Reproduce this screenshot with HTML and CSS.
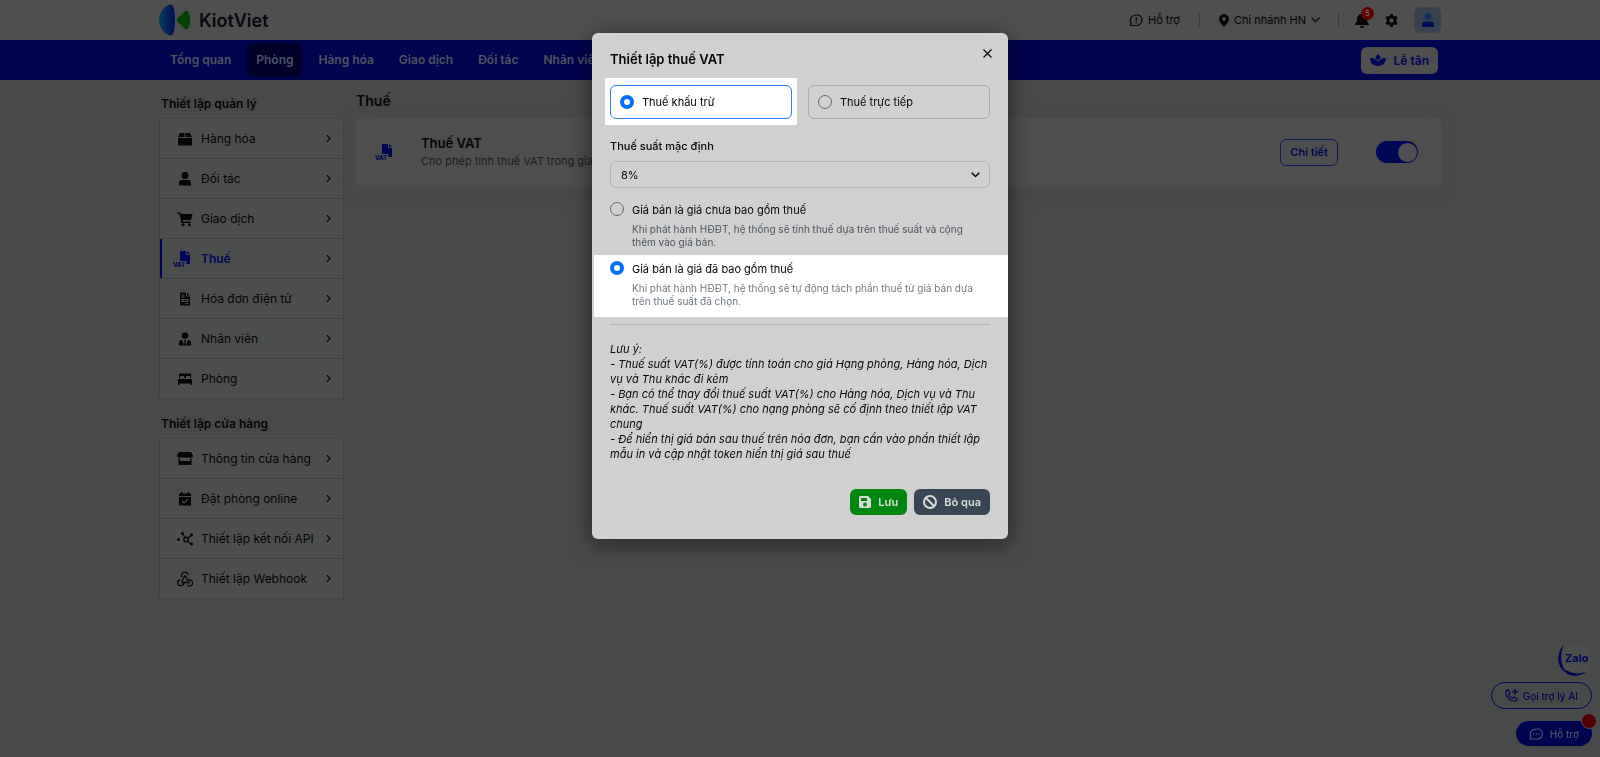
FILE: index.html
```html
<!DOCTYPE html>
<html lang="vi">
<head>
    <meta charset="UTF-8">
    <meta name="viewport" content="width=device-width, initial-scale=1.0">
    <title>KiotViet - Thuế</title>
    <link rel="stylesheet" href="styles.css">
</head>
<body>
    <!-- shared arrow -->
    <svg class="sprite" aria-hidden="true">
        <symbol id="chevron" viewBox="0 0 6 10"><path d="M1 1l4 4-4 4" fill="none" stroke="currentColor" stroke-width="1.5"/></symbol>
    </svg>

    <header class="topbar">
        <div class="container topbar-row">
            <a href="#" class="logo">
                <svg width="32" height="32" viewBox="0 0 32 32">
                    <defs>
                        <linearGradient id="g1"><stop offset="0" stop-color="#083c5a"/><stop offset="1" stop-color="#000c58"/></linearGradient>
                    </defs>
                    <path fill="url(#g1)" d="M12 0.500C14 0.500 16 5 16 16s-2 15.500-4 15.500C7 31.500 0 25 0 16S7 0.500 12 0.500z"/>
                    <path fill="#004200" d="M18.500 14.500l7-7C29 4.500 31 10 31 16s-2 11.500-5.500 8.500l-7-7a2 2 0 0 1 0-3z"/>
                </svg>
                <span>KiotViet</span>
            </a>
            <div class="topbar-right">
                <a href="#" class="top-link">
                    <svg width="14" height="13" viewBox="0 0 14 13" fill="none" stroke="currentColor" stroke-width="1.200"><path d="M1 12l1-3A5 5 0 0 1 1.500 6C1.500 3 4 1 7.500 1S13 3 13 6s-2.500 5.500-5.500 5.500H1"/><path d="M7.400 3.500v3M7.400 7.800v1.400" stroke-width="1.600"/></svg>
                    Hỗ trợ
                </a>
                <span class="divider"></span>
                <button class="top-link">
                    <svg width="10" height="13" viewBox="0 0 10 13"><path fill="currentColor" fill-rule="evenodd" d="M5 0a5 5 0 0 1 5 5c0 3-3.500 6-5 8C3.500 11 0 8 0 5a5 5 0 0 1 5-5zm0 3a2 2 0 1 0 0 4 2 2 0 0 0 0-4z"/></svg>
                    Chi nhánh HN
                    <svg width="9" height="6" viewBox="0 0 9 6" fill="none" stroke="currentColor" stroke-width="1.200"><path d="M0.500 0.700l4 4 4-4"/></svg>
                </button>
                <span class="divider divider-end"></span>
                <button class="icon-btn" aria-label="Thông báo">
                    <svg width="14" height="15" viewBox="0 0 14 15"><path fill="currentColor" d="M7 0a1 1 0 0 1 1 1c2.500.500 4 2.300 4 5 0 3 .800 4 2 5v1H0v-1c1.200-1 2-2 2-5 0-2.700 1.500-4.500 4-5a1 1 0 0 1 1-1zM5 13h4a2 2 0 0 1-4 0z"/></svg>
                    <span class="badge">5</span>
                </button>
                <button class="icon-btn" aria-label="Cài đặt">
                    <svg width="13" height="13" viewBox="0 0 24 24"><path fill="currentColor" fill-rule="evenodd" d="M9.500 0h5l.700 3.500 2 1.200L20.700 3.500l2.500 4.400-2.700 2.500v3.200l2.700 2.500-2.500 4.400-3.500-1.200-2 1.200-.700 3.500h-5l-.700-3.500-2-1.200-3.500 1.200L.800 16.100l2.700-2.500v-3.200L.800 7.900l2.500-4.400 3.500 1.200 2-1.200zM12 8a4 4 0 1 0 0 8 4 4 0 0 0 0-8z"/></svg>
                </button>
                <button class="avatar" aria-label="Tài khoản">
                    <svg width="12" height="14" viewBox="0 0 12 14"><circle cx="6" cy="3.500" r="3.500" fill="#11305c"/><path fill="#000c50" d="M0 14v-2.500C0 9.500 1.500 8.500 3 8.500h6c1.500 0 3 1 3 3V14z"/></svg>
                </button>
            </div>
        </div>
    </header>

    <nav class="navbar">
        <div class="container navbar-row">
            <div class="nav-links">
                <a href="#">Tổng quan</a>
                <a href="#" class="active">Phòng</a>
                <a href="#">Hàng hóa</a>
                <a href="#">Giao dịch</a>
                <a href="#">Đối tác</a>
                <a href="#">Nhân viên</a>
            </div>
            <button class="reception">
                <svg width="16" height="12" viewBox="0 0 16 12"><path fill="currentColor" d="M8 0c1.500 1.500 2.500 2.500 2.500 4L8 6.500 5.500 4C5.500 2.500 6.500 1.500 8 0zM0 4c3 0 6 .500 8 4 2-3.500 5-4 8-4-.300 5-3 8-8 8S.300 9 0 4z"/></svg>
                Lễ tân
            </button>
        </div>
    </nav>

    <div class="container page">
        <aside class="sidebar">
            <h2>Thiết lập quản lý</h2>
            <ul class="menu">
                <li><a href="#">
                    <svg class="ico" viewBox="0 0 16 16"><path fill="currentColor" d="M3 2h4.500v4H1zM8.500 2H13l2 4H8.500zM1 7h14v6.500a1 1 0 0 1-1 1H2a1 1 0 0 1-1-1z"/></svg>
                    <span>Hàng hóa</span><svg class="chev"><use href="#chevron"/></svg></a></li>
                <li><a href="#">
                    <svg class="ico" viewBox="0 0 16 16"><circle cx="8" cy="4.500" r="3.500" fill="currentColor"/><path fill="currentColor" d="M2 14.500V12a3 3 0 0 1 3-3h6a3 3 0 0 1 3 3v2.500z"/></svg>
                    <span>Đối tác</span><svg class="chev"><use href="#chevron"/></svg></a></li>
                <li><a href="#">
                    <svg class="ico" viewBox="0 0 16 16"><path fill="currentColor" d="M0.500 1.500h3L4 3h11.500L14 9H5.500l.300 1.500H14V12H4.500L2.500 3h-2z"/><circle cx="6" cy="13.700" r="1.500" fill="currentColor"/><circle cx="12.500" cy="13.700" r="1.500" fill="currentColor"/></svg>
                    <span>Giao dịch</span><svg class="chev"><use href="#chevron"/></svg></a></li>
                <li class="active"><a href="#">
                    <svg class="ico-vat" viewBox="0 0 18 18"><path fill="currentColor" d="M7 1h6v4h4v9h-3.500v-3H7zM14 1l3 3h-3z"/><text x="0" y="17">VAT</text></svg>
                    <span>Thuế</span><svg class="chev"><use href="#chevron"/></svg></a></li>
                <li><a href="#">
                    <svg class="ico" viewBox="0 0 16 16"><path fill="currentColor" fill-rule="evenodd" d="M3 1.500h6v4h4v9H3zM10 1.500l3 3h-3zM4.500 3.500v1h3v-1zM4.500 5.500v1h3v-1zM4.500 8v3h7V8zM6 9h4v1H6zM8.500 12v1h3v-1z"/></svg>
                    <span>Hóa đơn điện tử</span><svg class="chev"><use href="#chevron"/></svg></a></li>
                <li><a href="#">
                    <svg class="ico" viewBox="0 0 16 16"><circle cx="8" cy="4.500" r="3.300" fill="currentColor"/><path fill="currentColor" d="M2 14.500V12a3 3 0 0 1 3-3l2 5 .500-3-.500-2h2l-.500 2 .500 3 2-5a3 3 0 0 1 3 3v2.500z"/></svg>
                    <span>Nhân viên</span><svg class="chev"><use href="#chevron"/></svg></a></li>
                <li><a href="#">
                    <svg class="ico" viewBox="0 0 16 16"><path fill="currentColor" fill-rule="evenodd" d="M2 2.500h12V7h-1V5H9v2H7V5H3v2H2zM1 8h14v6h-1.500v-1.500h-11V14H1z"/></svg>
                    <span>Phòng</span><svg class="chev"><use href="#chevron"/></svg></a></li>
            </ul>

            <h2>Thiết lập cửa hàng</h2>
            <ul class="menu">
                <li><a href="#">
                    <svg class="ico" viewBox="0 0 16 16"><path fill="currentColor" fill-rule="evenodd" d="M2 1h12l2 3.500c0 1.500-.800 2-1.500 2h-13C.800 6.500 0 6 0 4.500zM1.500 7.500H3V10h10V7.500h1.500V14h-13z"/></svg>
                    <span>Thông tin cửa hàng</span><svg class="chev"><use href="#chevron"/></svg></a></li>
                <li><a href="#">
                    <svg class="ico" viewBox="0 0 16 16"><path fill="currentColor" fill-rule="evenodd" d="M4 1h1.500v1.500h5V1H12v1.500h2V5H2V2.500h2zM2 6h12v8.500H2zM5.500 9.500l-.800.800L7 12.700l4.300-4.200-.800-.800L7 11z"/></svg>
                    <span>Đặt phòng online</span><svg class="chev"><use href="#chevron"/></svg></a></li>
                <li><a href="#">
                    <svg class="ico" viewBox="0 0 16 16" fill="none" stroke="currentColor" stroke-width="1.400"><circle cx="9" cy="8.500" r="2.200"/><path d="M8 6.500L6 3M11 7l3.500-3M10.500 10.500l4 2.500"/><g fill="currentColor" stroke="none"><circle cx="1.500" cy="8.500" r="1.500"/><circle cx="5.500" cy="2.500" r="1.500"/><circle cx="14.500" cy="3.700" r="1.500"/><circle cx="14.500" cy="13" r="1.500"/></g></svg>
                    <span>Thiết lập kết nối API</span><svg class="chev"><use href="#chevron"/></svg></a></li>
                <li><a href="#">
                    <svg class="ico" viewBox="0 0 16 16" fill="none" stroke="currentColor" stroke-width="1.300"><path d="M5.300 6.300A3.200 3.200 0 1 1 11 4.200M8 4.500l3 5a3 3 0 1 1-.500 4.500M8 4.500l-3.500 7M4.500 11.500H10h3M3.300 8.700a3 3 0 1 0 3.500 2.900"/></svg>
                    <span>Thiết lập Webhook</span><svg class="chev"><use href="#chevron"/></svg></a></li>
            </ul>
        </aside>

        <main class="content">
            <h1>Thuế</h1>
            <section class="card">
                <svg class="ico-vat" viewBox="0 0 18 18"><path fill="currentColor" d="M7 1h6v4h4v9h-3.500v-3H7zM14 1l3 3h-3z"/><text x="0" y="17">VAT</text></svg>
                <div class="card-text">
                    <h3>Thuế VAT</h3>
                    <p>Cho phép tính thuế VAT trong giao dịch</p>
                </div>
                <button class="detail">Chi tiết</button>
                <input type="checkbox" class="switch" aria-label="Thuế VAT" checked>
            </section>
        </main>
    </div>

    <div class="floating">
        <a href="#" class="zalo">
            <svg width="34" height="34" viewBox="0 0 34 34"><circle cx="18" cy="16" r="16" fill="#4b4d4c"/><path fill="#000656" d="M6 1C-2 10-1 23 6 28l1 1c5 5 14 5 21 0-7 2-13 2-18-1l-3-1C2 21 2 9 6 1z"/></svg>
            <span>Zalo</span>
        </a>
        <button class="ai-call">
            <svg width="13" height="13" viewBox="0 0 13 13" fill="none" stroke="currentColor" stroke-width="1.200"><path d="M1 2l2-1.300L5 4 3.800 5.500c.500 1.500 2 3 3.700 3.700L9 8l3.300 2-1.300 2C6 13.500-.500 7 1 2z"/><path d="M10 0v5.500M7.300 2.700h5.500" stroke-width="1.500"/></svg>
            Gọi trợ lý AI
        </button>
        <button class="support">
            <svg width="14" height="12" viewBox="0 0 14 12" fill="none" stroke="currentColor" stroke-width="1.200"><path d="M1 11l1-2.500C0 4 3 1 7.500 1 11 1 13.400 3 13.400 6S11 11 7.500 11z"/><path d="M4.200 6h1.200M6.900 6h1.200M9.600 6h1.200" stroke-width="1.400"/></svg>
            Hỗ trợ
            <span class="dot"></span>
        </button>
    </div>

    <div class="overlay">
        <form class="modal" role="dialog" aria-labelledby="modal-title">
            <button type="button" class="close" aria-label="Đóng">
                <svg width="9" height="9" viewBox="0 0 9 9" stroke="currentColor" stroke-width="1.200"><path d="M0.500 0.500l8 8M8.500 0.500l-8 8"/></svg>
            </button>
            <h2 id="modal-title">Thiết lập thuế VAT</h2>

            <div class="methods">
                <div class="method highlight">
                    <label><input type="radio" name="method" checked>Thuế khấu trừ</label>
                </div>
                <div class="method">
                    <label><input type="radio" name="method">Thuế trực tiếp</label>
                </div>
            </div>

            <label class="field-label" for="rate">Thuế suất mặc định</label>
            <div class="select-wrap">
                <select id="rate">
                    <option>8%</option>
                </select>
                <svg width="9" height="6" viewBox="0 0 9 6" fill="none" stroke="currentColor" stroke-width="1.500"><path d="M0.700 0.700l3.800 3.800 3.800-3.800"/></svg>
            </div>

            <div class="price">
                <input type="radio" name="price" id="price-excl">
                <div>
                    <label for="price-excl">Giá bán là giá chưa bao gồm thuế</label>
                    <p>Khi phát hành HĐĐT, hệ thống sẽ tính thuế dựa trên thuế suất và cộng thêm vào giá bán.</p>
                </div>
            </div>
            <div class="price highlight">
                <input type="radio" name="price" id="price-incl" checked>
                <div>
                    <label for="price-incl">Giá bán là giá đã bao gồm thuế</label>
                    <p>Khi phát hành HĐĐT, hệ thống sẽ tự động tách phần thuế từ giá bán dựa trên thuế suất đã chọn.</p>
                </div>
            </div>

            <hr>

            <div class="note">
                <p>Lưu ý:</p>
                <p>- Thuế suất VAT(%) được tính toán cho giá Hạng phòng, Hàng hóa, Dịch vụ và Thu khác đi kèm</p>
                <p>- Bạn có thể thay đổi thuế suất VAT(%) cho Hàng hóa, Dịch vụ và Thu khác. Thuế suất VAT(%) cho hạng phòng sẽ cố định theo thiết lập VAT chung</p>
                <p>- Để hiển thị giá bán sau thuế trên hóa đơn, bạn cần vào phần thiết lập mẫu in và cập nhật token hiển thị giá sau thuế</p>
            </div>

            <div class="actions">
                <button type="submit" class="save">
                    <svg width="12" height="12" viewBox="0 0 12 12"><path fill="currentColor" fill-rule="evenodd" d="M1.500 0H9l3 3v7.500a1.500 1.500 0 0 1-1.500 1.500h-9A1.500 1.500 0 0 1 0 10.500v-9A1.500 1.500 0 0 1 1.500 0zM2 2v3h6V2zM6 6.500a2 2 0 1 0 0 4 2 2 0 0 0 0-4z"/></svg>
                    Lưu
                </button>
                <button type="button" class="cancel">
                    <svg width="14" height="14" viewBox="0 0 14 14" fill="none" stroke="currentColor" stroke-width="2"><circle cx="7" cy="7" r="6"/><path d="M3 3l8 8"/></svg>
                    Bỏ qua
                </button>
            </div>
        </form>
    </div>
</body>
</html>
```
FILE: styles.css
```css
* {
    box-sizing: border-box;
}
body {
    margin: 0;
    min-height: 100vh;
    background-color: #484a49;
    color: #050505;
    font-family: Inter, "Liberation Sans", sans-serif;
    font-size: 12px;
}
h1, h2, h3, p, ul {
    margin: 0;
    padding: 0;
}
ul {
    list-style: none;
}
a {
    color: inherit;
    text-decoration: none;
}
button {
    display: flex;
    align-items: center;
    padding: 0;
    border: none;
    background: none;
    color: inherit;
    font: inherit;
    cursor: pointer;
}
svg {
    flex-shrink: 0;
}
.sprite {
    position: absolute;
    width: 0;
    height: 0;
}
.container {
    max-width: 1282px;
    margin: 0 auto;
}

/* header */
.topbar {
    background-color: #4f4f4f;
}
.topbar-row {
    display: flex;
    align-items: center;
    justify-content: space-between;
    height: 40px;
}
.logo {
    display: flex;
    align-items: center;
    gap: 8px;
    color: #05080f;
    font-size: 18px;
    font-weight: 600;
}
.topbar-right {
    display: flex;
    align-items: center;
    gap: 16px;
}
.top-link {
    display: flex;
    align-items: center;
    gap: 5px;
    font-size: 11px;
}
.divider {
    width: 1px;
    height: 14px;
    margin: 0 3px;
    background-color: #3a3a3a;
}
.divider-end {
    margin: 0 0 0 2px;
}
.icon-btn {
    position: relative;
}
.badge {
    position: absolute;
    top: -6px;
    right: -5px;
    width: 13px;
    height: 13px;
    border-radius: 50%;
    background-color: #5c0000;
    color: #8a7a7a;
    font-size: 8px;
    line-height: 13px;
    text-align: center;
}
.avatar {
    justify-content: center;
    width: 27px;
    height: 26px;
    border-radius: 6px;
    background-color: #39424f;
}

/* navigation */
.navbar {
    background-color: #00034f;
}
.navbar-row {
    display: flex;
    align-items: center;
    justify-content: space-between;
    height: 40px;
    padding: 0 3px 0 2px;
}
.nav-links {
    display: flex;
    gap: 7px;
}
.nav-links a {
    padding: 0 9px;
    border-radius: 6px;
    color: #4f5560;
    font-weight: 600;
    line-height: 34px;
}
.nav-links .active {
    background-color: #000029;
}
.reception {
    gap: 8px;
    height: 27px;
    padding: 0 9px;
    border-radius: 6px;
    background-color: #4f4f4f;
    color: #000656;
    font-weight: 600;
}

/* page */
.page {
    display: flex;
    gap: 12px;
}
.sidebar {
    flex: 0 0 185px;
    padding-top: 16px;
}
.sidebar h2 {
    padding-left: 2px;
    font-size: 12px;
    font-weight: 600;
    line-height: 16px;
}
.menu {
    margin: 6px 0 17px;
    border: 1px solid #3f4142;
    border-top: none;
    background-color: #4c4e4d;
}
.menu li {
    border-top: 1px solid #3f4142;
}
.menu a {
    display: flex;
    align-items: center;
    height: 39px;
    padding: 0 12px 0 17px;
}
.menu span {
    flex: 1;
    margin-left: 8px;
}
.ico {
    width: 16px;
    height: 16px;
}
.ico-vat {
    width: 18px;
    height: 18px;
    overflow: visible;
    color: #000656;
}
.ico-vat text {
    fill: currentColor;
    font-size: 6px;
    font-weight: 800;
}
.chev {
    width: 5px;
    height: 9px;
}
.menu .active a {
    padding-left: 11px;
    border-left: 2px solid #000656;
}
.menu .active span {
    color: #000656;
    font-weight: 600;
    margin-left: 10px;
}
.content {
    flex: 1;
    padding-top: 12px;
}
.content h1 {
    font-size: 14px;
    font-weight: 600;
    line-height: 18px;
}
.card {
    display: flex;
    align-items: center;
    height: 70px;
    margin-top: 7px;
    padding: 0 23px 0 19px;
    border-radius: 6px;
    background-color: #4e4e4e;
    box-shadow: 0 4px 16px rgba(70, 70, 75, 0.6);
}
.card-text {
    flex: 1;
    margin-left: 28px;
}
.card-text h3 {
    font-size: 13px;
    font-weight: 600;
    line-height: 18px;
}
.card-text p {
    color: #1b1d20;
    font-size: 11px;
    line-height: 18px;
}
.detail {
    justify-content: center;
    height: 27px;
    padding: 0 9px;
    border: 1px solid #0a1a56;
    border-radius: 6px;
    color: #000656;
    font-size: 11px;
    font-weight: 600;
}
.switch {
    appearance: none;
    display: flex;
    align-items: center;
    justify-content: flex-end;
    width: 42px;
    height: 22px;
    margin: 0 0 0 38px;
    padding: 1px;
    border-radius: 11px;
    background-color: #000656;
}
.switch::before {
    content: "";
    width: 19px;
    height: 19px;
    border-radius: 50%;
    background-color: #4f4f4f;
}

/* floating buttons */
.floating {
    position: fixed;
    right: 8px;
    bottom: 11px;
    display: flex;
    flex-direction: column;
    align-items: flex-end;
    color: #000656;
    font-size: 10px;
    font-weight: 500;
}
.zalo {
    position: relative;
    display: flex;
    margin-bottom: 5px;
}
.zalo span {
    position: absolute;
    top: 8px;
    left: 7px;
    font-size: 11px;
    font-weight: 700;
}
.ai-call {
    gap: 5px;
    height: 27px;
    margin-bottom: 12px;
    padding: 0 13px;
    border: 1px solid #000656;
    border-radius: 14px;
}
.support {
    position: relative;
    gap: 7px;
    height: 25px;
    padding: 0 13px;
    border-radius: 13px;
    background-color: #00034f;
    color: #4f5560;
}
.dot {
    position: absolute;
    top: -8px;
    right: -5px;
    width: 16px;
    height: 16px;
    border: 1px solid #4f4f4f;
    border-radius: 50%;
    background-color: #500000;
}

/* modal */
.overlay {
    position: fixed;
    inset: 0;
    display: flex;
    justify-content: center;
    align-items: flex-start;
    padding-top: 33px;
}
.modal {
    position: relative;
    width: 416px;
    padding: 16px 18px 24px;
    border-radius: 6px;
    background-color: #d0d0d0;
    box-shadow: 0 4px 24px rgba(0, 0, 0, 0.5);
    font-size: 11px;
}
.modal h2 {
    font-size: 13px;
    font-weight: 600;
    line-height: 20px;
}
.close {
    position: absolute;
    top: 16px;
    right: 16px;
}
.methods {
    display: grid;
    grid-template-columns: 1fr 1fr;
    gap: 16px;
    margin: 16px 0 19px;
}
.method label {
    display: flex;
    align-items: center;
    gap: 8px;
    height: 34px;
    padding: 0 9px;
    border: 1px solid #a9abad;
    border-radius: 6px;
}
.highlight {
    background-color: #fff;
}
.method.highlight {
    margin: -7px -5px -6px;
    padding: 7px 5px 6px;
}
.method.highlight label {
    border-color: #2f7cf6;
}
.modal input[type="radio"] {
    appearance: none;
    flex-shrink: 0;
    width: 14px;
    height: 14px;
    margin: 0;
    border: 1px solid #5d6772;
    border-radius: 50%;
}
.modal input[type="radio"]:checked {
    border: 4px solid #006ffd;
    background-color: #fff;
}
.field-label {
    display: block;
    font-weight: 500;
    line-height: 16px;
}
.select-wrap {
    display: grid;
    align-items: center;
    margin: 7px 0 14px;
}
.select-wrap select {
    grid-area: 1 / 1;
    appearance: none;
    height: 27px;
    padding: 0 10px;
    border: 1px solid #b4b6b8;
    border-radius: 6px;
    background: none;
    color: inherit;
    font: inherit;
}
.select-wrap svg {
    grid-area: 1 / 1;
    justify-self: end;
    margin-right: 10px;
    pointer-events: none;
}
.price {
    display: flex;
    gap: 8px;
    line-height: 16px;
}
.price input {
    margin-top: 1px;
}
.price p {
    margin-top: 5px;
    padding-right: 12px;
    color: #4c555e;
    font-size: 10px;
    line-height: 13px;
}
.price.highlight {
    margin: 6px -18px 7px -16px;
    padding: 6px 18px 9px 16px;
}
.price.highlight p {
    color: #6f7982;
}
.modal hr {
    height: 1px;
    margin: 0 0 17px;
    border: none;
    background-color: #b4b4b4;
}
.note {
    font-style: italic;
    line-height: 15px;
}
.actions {
    display: flex;
    justify-content: flex-end;
    gap: 7px;
    margin-top: 27px;
}
.actions button {
    gap: 7px;
    height: 26px;
    padding: 0 9px;
    border-radius: 6px;
    color: #d8dcd8;
    font-weight: 600;
}
.save {
    background-color: #00870f;
}
.cancel {
    background-color: #394656;
}
```
